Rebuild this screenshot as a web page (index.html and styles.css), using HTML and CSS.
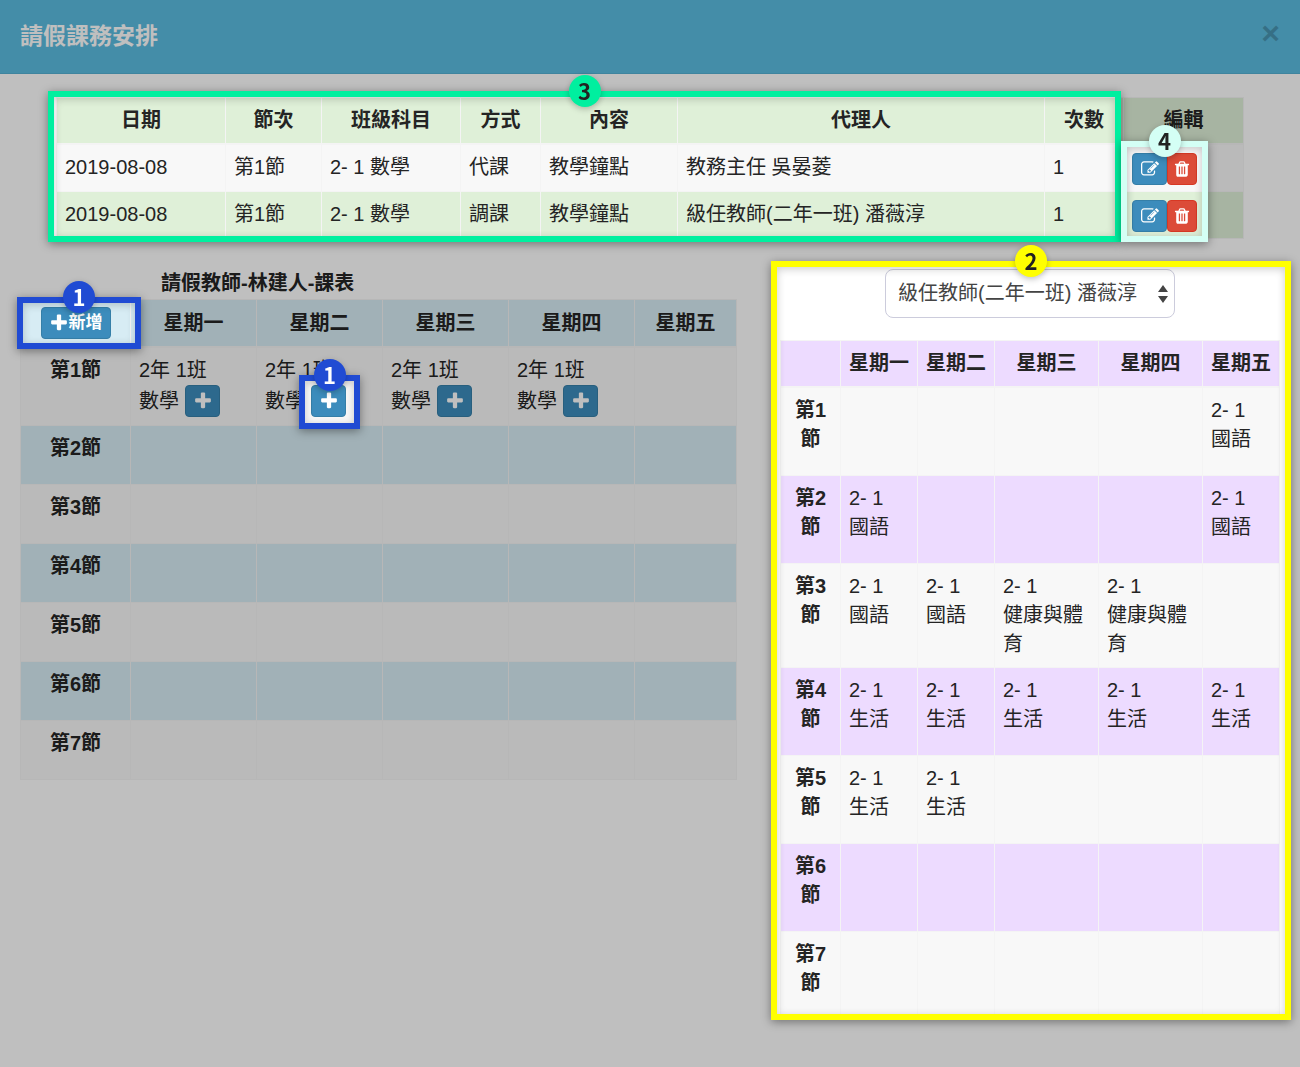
FILE: index.html
```html
<!DOCTYPE html>
<html lang="zh-Hant">
<head>
<meta charset="utf-8">
<meta name="viewport" content="width=device-width, initial-scale=1">
<title>請假課務安排</title>
<link rel="stylesheet" href="styles.css">
</head>
<body>
<svg class="sprite" aria-hidden="true">
  <symbol id="plus" viewBox="0 0 1792 1792"><path d="M1600 736v192q0 40-28 68t-68 28h-416v416q0 40-28 68t-68 28h-192q-40 0-68-28t-28-68v-416h-416q-40 0-68-28t-28-68v-192q0-40 28-68t68-28h416v-416q0-40 28-68t68-28h192q40 0 68 28t28 68v416h416q40 0 68 28t28 68z"/></symbol>
  <symbol id="edit" viewBox="0 0 1792 1792"><path d="M888 1184l116-116-152-152-116 116v56h96v96h56zm440-720q-16-16-33 1l-350 350q-17 17-1 33t33-1l350-350q17-17 1-33zm80 594v190q0 119-84.5 203.5t-203.5 84.5h-832q-119 0-203.5-84.5t-84.5-203.5v-832q0-119 84.5-203.5t203.5-84.5h832q63 0 117 25 15 7 18 23 3 17-9 29l-49 49q-14 14-32 8-23-6-45-6h-832q-66 0-113 47t-47 113v832q0 66 47 113t113 47h832q66 0 113-47t47-113v-126q0-13 9-22l64-64q15-15 35-7t20 29zm-96-738l288 288-672 672h-288v-288zm444 132l-92 92-288-288 92-92q28-28 68-28t68 28l152 152q28 28 28 68t-28 68z"/></symbol>
  <symbol id="trash" viewBox="0 0 1792 1792"><path d="M704 1376v-704q0-14-9-23t-23-9h-64q-14 0-23 9t-9 23v704q0 14 9 23t23 9h64q14 0 23-9t9-23zm256 0v-704q0-14-9-23t-23-9h-64q-14 0-23 9t-9 23v704q0 14 9 23t23 9h64q14 0 23-9t9-23zm256 0v-704q0-14-9-23t-23-9h-64q-14 0-23 9t-9 23v704q0 14 9 23t23 9h64q14 0 23-9t9-23zm-544-992h448l-48-117q-7-9-17-11h-317q-10 2-17 11zm928 32v64q0 14-9 23t-23 9h-96v948q0 83-47 143.5t-113 60.5h-832q-66 0-113-58.5t-47-141.5v-952h-96q-14 0-23-9t-9-23v-64q0-14 9-23t23-9h309l70-167q15-37 54-63t79-26h320q40 0 79 26t54 63l70 167h309q14 0 23 9t9 23z"/></symbol>
</svg>
<div class="page">
  <header class="bar">
    <h1>請假課務安排</h1>
    <button class="close" type="button" aria-label="關閉">×</button>
  </header>

  <main>
    <section class="records">
      <table class="grid green">
        <colgroup><col class="w-date"><col class="w-period"><col class="w-class"><col class="w-mode"><col class="w-content"><col class="w-agent"><col class="w-count"><col class="w-edit"></colgroup>
        <thead>
          <tr><th>日期</th><th>節次</th><th>班級科目</th><th>方式</th><th>內容</th><th>代理人</th><th>次數</th><th>編輯</th></tr>
        </thead>
        <tbody>
          <tr><td>2019-08-08</td><td>第1節</td><td>2- 1 數學</td><td>代課</td><td>教學鐘點</td><td>教務主任 吳晏菱</td><td>1</td>
            <td><div class="actions"><button class="btn" type="button" aria-label="編輯"><svg><use href="#edit"/></svg></button><button class="btn danger" type="button" aria-label="刪除"><svg><use href="#trash"/></svg></button></div></td></tr>
          <tr><td>2019-08-08</td><td>第1節</td><td>2- 1 數學</td><td>調課</td><td>教學鐘點</td><td>級任教師(二年一班) 潘薇淳</td><td>1</td>
            <td><div class="actions"><button class="btn" type="button" aria-label="編輯"><svg><use href="#edit"/></svg></button><button class="btn danger" type="button" aria-label="刪除"><svg><use href="#trash"/></svg></button></div></td></tr>
        </tbody>
      </table>
      <div class="spot spot-records"><span class="badge">3</span></div>
      <div class="spot spot-edit"><span class="badge">4</span></div>
    </section>

    <div class="columns">
      <section>
        <h2>請假教師-林建人-課表</h2>
        <table class="grid blue">
          <colgroup><col class="w-label"><col class="w-day"><col class="w-day"><col class="w-day"><col class="w-day"><col class="w-last"></colgroup>
          <thead>
            <tr><th class="anchor"><button class="btn add" type="button"><svg class="big"><use href="#plus"/></svg>新增</button><div class="spot spot-add"><span class="badge">1</span></div></th><th>星期一</th><th>星期二</th><th>星期三</th><th>星期四</th><th>星期五</th></tr>
          </thead>
          <tbody>
            <tr><th>第1節</th>
              <td>2年 1班<div class="lesson">數學<button class="btn" type="button" aria-label="新增"><svg class="big"><use href="#plus"/></svg></button></div></td>
              <td>2年 1班<div class="lesson">數學<span class="anchor"><button class="btn" type="button" aria-label="新增"><svg class="big"><use href="#plus"/></svg></button><span class="spot spot-cell"><span class="badge">1</span></span></span></div></td>
              <td>2年 1班<div class="lesson">數學<button class="btn" type="button" aria-label="新增"><svg class="big"><use href="#plus"/></svg></button></div></td>
              <td>2年 1班<div class="lesson">數學<button class="btn" type="button" aria-label="新增"><svg class="big"><use href="#plus"/></svg></button></div></td>
              <td></td></tr>
            <tr><th>第2節</th><td></td><td></td><td></td><td></td><td></td></tr>
            <tr><th>第3節</th><td></td><td></td><td></td><td></td><td></td></tr>
            <tr><th>第4節</th><td></td><td></td><td></td><td></td><td></td></tr>
            <tr><th>第5節</th><td></td><td></td><td></td><td></td><td></td></tr>
            <tr><th>第6節</th><td></td><td></td><td></td><td></td><td></td></tr>
            <tr><th>第7節</th><td></td><td></td><td></td><td></td><td></td></tr>
          </tbody>
        </table>
      </section>

      <section class="anchor">
        <div class="picker">
          <select aria-label="代理教師"><option>級任教師(二年一班) 潘薇淳</option></select>
          <svg class="arrows" viewBox="0 0 10 18" aria-hidden="true"><path d="M0 7L5 0l5 7zM0 11h10l-5 7z"/></svg>
        </div>
        <table class="grid purple">
          <colgroup><col class="w-a"><col class="w-b"><col class="w-b"><col class="w-c"><col class="w-c"><col class="w-b"></colgroup>
          <thead>
            <tr><th></th><th>星期一</th><th>星期二</th><th>星期三</th><th>星期四</th><th>星期五</th></tr>
          </thead>
          <tbody>
            <tr><th>第1節</th><td></td><td></td><td></td><td></td><td>2- 1<br>國語</td></tr>
            <tr><th>第2節</th><td>2- 1<br>國語</td><td></td><td></td><td></td><td>2- 1<br>國語</td></tr>
            <tr><th>第3節</th><td>2- 1<br>國語</td><td>2- 1<br>國語</td><td>2- 1<br>健康與體育</td><td>2- 1<br>健康與體育</td><td></td></tr>
            <tr><th>第4節</th><td>2- 1<br>生活</td><td>2- 1<br>生活</td><td>2- 1<br>生活</td><td>2- 1<br>生活</td><td>2- 1<br>生活</td></tr>
            <tr><th>第5節</th><td>2- 1<br>生活</td><td>2- 1<br>生活</td><td></td><td></td><td></td></tr>
            <tr><th>第6節</th><td></td><td></td><td></td><td></td><td></td></tr>
            <tr><th>第7節</th><td></td><td></td><td></td><td></td><td></td></tr>
          </tbody>
        </table>
        <div class="spot spot-agent"><span class="badge">2</span></div>
      </section>
    </div>
  </main>
</div>
</body>
</html>
```
FILE: styles.css
```css
* { box-sizing: border-box; }

body {
  margin: 0;
  background: #fff;
  color: #242424;
  font: 20px/29px "Liberation Sans", "Noto Sans CJK TC", sans-serif;
}

.sprite { position: absolute; width: 0; height: 0; }

.page { position: relative; min-height: 100vh; padding-bottom: 40px; }

/* Shade over the whole page; the .spot boxes brighten their part again */
.page::after {
  content: "";
  position: absolute;
  inset: 0;
  z-index: 1;
  background: rgba(0, 0, 0, .25);
  pointer-events: none;
}

.bar {
  display: flex;
  justify-content: space-between;
  align-items: center;
  height: 74px;
  padding: 0 20px;
  background: #5bbce0;
  border-bottom: 1px solid #54b0d3;
}
.bar h1 { margin: 0; font-size: 23px; color: #fff; }
.close {
  padding: 0 0 8px;
  border: 0;
  background: none;
  color: #000;
  font: bold 32px/30px "Liberation Sans", sans-serif;
  opacity: .2;
}

.records { position: relative; margin: 23px 57px 30px 56px; }

.columns {
  display: grid;
  grid-template-columns: 716fr 498fr;
  gap: 43px;
  align-items: start;
  padding: 0 23px 0 20px;
}
h2 { margin: 0 0 1px; padding-left: 141px; font-size: 20px; line-height: 29px; }

/* Tables */
.grid { width: 100%; table-layout: fixed; border-collapse: collapse; }
.grid th, .grid td { padding: 8px; border: 1px solid #f4f4f4; vertical-align: top; }
.grid td { text-align: left; }
.grid thead th { border-bottom-width: 2px; }
.grid tbody tr:nth-child(odd) { background: #f9f9f9; }
.green thead, .green tbody tr:nth-child(even) { background: #dff0d8; }
.blue thead, .blue tbody tr:nth-child(even) { background: #d7edf5; }
.purple thead, .purple tbody tr:nth-child(even) { background: #eedbff; }

.green tbody tr { height: 47px; }
.blue tbody tr { height: 59px; }
.blue thead th { padding: 7px 8px; vertical-align: middle; }
.purple tbody tr { height: 88px; }

.w-date { width: 169px; }
.w-period { width: 96px; }
.w-class { width: 139px; }
.w-mode { width: 80px; }
.w-content { width: 137px; }
.w-agent { width: 367px; }
.w-count { width: 79px; }
.w-edit { width: 120px; }
.w-label { width: 110px; }
.w-day { width: 126px; }
.w-last { width: 102px; }
.w-a { width: 60px; }
.w-b { width: 77px; }
.w-c { width: 104px; }

/* Buttons */
.btn {
  display: inline-flex;
  align-items: center;
  justify-content: center;
  width: 35px;
  height: 32px;
  padding: 0;
  border: 1px solid #367fa9;
  border-radius: 4px;
  background: #3c8dbc;
  color: #fff;
  font: bold 17px/24px "Liberation Sans", "Noto Sans CJK TC", sans-serif;
}
.btn svg { flex: none; width: 18px; height: 18px; fill: currentColor; }
.btn .big { width: 20px; height: 20px; }
.btn.danger { width: 30px; border-color: #d73925; background: #dd4b39; }
.grid .btn.add { width: 70px; vertical-align: middle; }
.actions { display: flex; height: 30px; }
.lesson { display: flex; align-items: center; gap: 6px; height: 32px; }
.lesson .anchor { display: flex; }

/* Drop-down */
.picker { position: relative; width: 58%; margin: 0 auto 22px; }
.picker select {
  display: block;
  width: 100%;
  height: 49px;
  padding: 0 32px 0 12px;
  border: 1px solid #ccd;
  border-radius: 8px;
  background: #fff;
  color: #444;
  font: inherit;
  appearance: none;
}
.arrows { position: absolute; top: 16px; right: 7px; width: 10px; height: 18px; fill: #444; pointer-events: none; }

/* Highlight boxes */
.anchor { position: relative; }
.spot {
  position: absolute;
  z-index: 2;
  border: 6px solid;
  backdrop-filter: brightness(1.3334);
  box-shadow: 0 2px 9px rgba(0, 0, 0, .4), inset 0 2px 8px rgba(0, 0, 0, .2);
  pointer-events: none;
}
.spot-records { inset: -6px 122px -3px -8px; border-color: #00ef9f; }
.spot-edit { inset: 44px 35px -3px auto; width: 87px; border-color: #d4fff5; }
.spot-add { inset: -3px -11px -3px -4px; border-color: #204bd3; }
.spot-cell { inset: -10px -14px -12px -12px; border-color: #204bd3; }
.spot-agent { inset: -8px -11px 0 -9px; border-color: #ff0; }

.badge {
  position: absolute;
  top: -22px;
  left: calc(50% - 16px);
  width: 32px;
  height: 32px;
  border-radius: 50%;
  color: #222;
  font: bold 22px/30px "Noto Sans CJK TC", sans-serif;
  text-align: center;
  box-shadow: 0 2px 6px rgba(0, 0, 0, .25);
}
.spot-records .badge { background: #00ef9f; }
.spot-edit .badge { background: #d4fff5; }
.spot-add .badge, .spot-cell .badge { background: #204bd3; color: #fff; }
.spot-agent .badge { background: #ff0; }
```
